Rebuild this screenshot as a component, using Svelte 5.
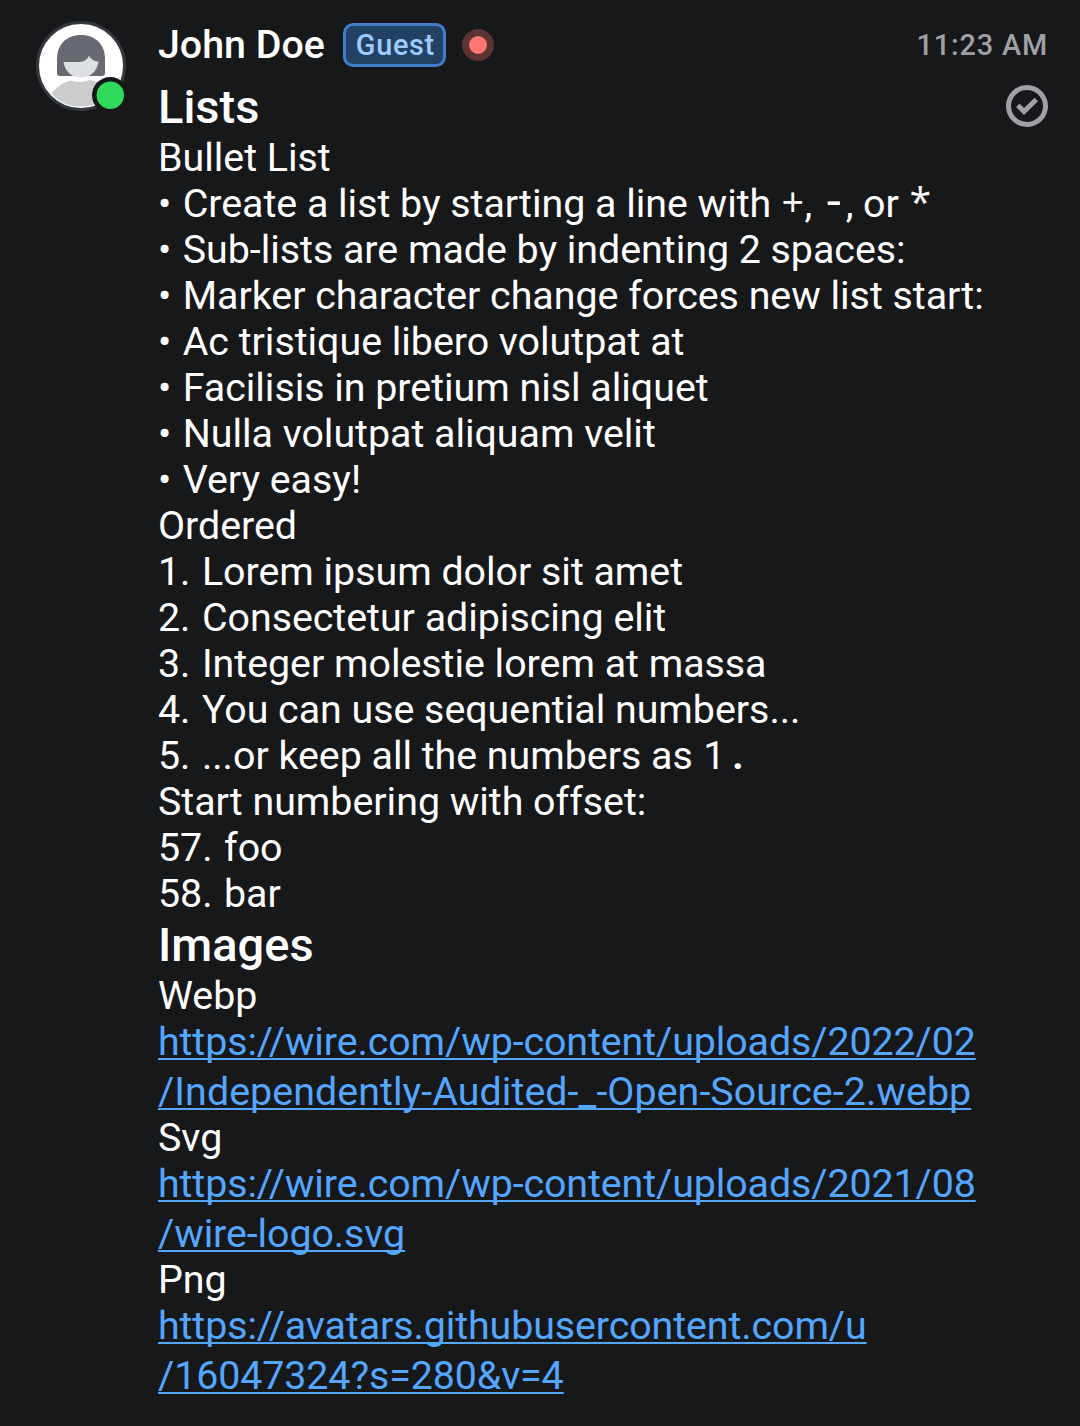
<script>
  const bullets = [
    'Sub-lists are made by indenting 2 spaces:',
    'Marker character change forces new list start:',
    'Ac tristique libero volutpat at',
    'Facilisis in pretium nisl aliquet',
    'Nulla volutpat aliquam velit',
    'Very easy!'
  ];
  const ordered = [
    'Lorem ipsum dolor sit amet',
    'Consectetur adipiscing elit',
    'Integer molestie lorem at massa',
    'You can use sequential numbers...'
  ];
  const images = [
    { name: 'Webp', parts: ['https://wire.com/wp-content/uploads/2022/02', '/Independently-Audited-_-Open-Source-2.webp'], loose: true },
    { name: 'Svg', parts: ['https://wire.com/wp-content/uploads/2021/08', '/wire-logo.svg'] },
    { name: 'Png', parts: ['https://avatars.githubusercontent.com/u', '/16047324?s=280&v=4'] }
  ];
</script>

<article class="message">
  <div class="avatar">
    <svg width="92" height="92" viewBox="0 0 92 92" aria-hidden="true">
      <circle cx="45" cy="45" r="43.5" fill="#fff" stroke="#34373d" stroke-width="3" />
      <path d="M15.500 72.500C20 66 28 61 35 59.500C41 61.500 48 61 54 59C64 61 70 66 74 72Q64 85.500 45 85.500T15.500 72.500Z" fill="#caccce" />
      <path d="M21 51V38C21 24 30 14 45 14S69 24 69 38V52Q69 55 66 55H24Q21 55 21 52Z" fill="#676b71" />
      <path d="M27.500 41H44Q51 40 53 34.700Q56 40.500 62.500 40.500C61 51 54 56.500 45 56.500S29 51 27.500 41Z" fill="#dce0e3" />
      <circle cx="74.300" cy="74.300" r="18.300" fill="#17181a" />
      <circle cx="74.300" cy="74.300" r="13.700" fill="#30db5b" />
    </svg>
  </div>
  <div class="content">
    <header>
      <span class="name">John Doe</span>
      <span class="badge">Guest</span>
      <span class="dot"></span>
      <time>11:23 AM</time>
    </header>
    <div class="body">
      <div class="text">
        <h2 class="lists">Lists</h2>
        <p>Bullet List</p>
        <p><span class="marker">•</span> Create a list by starting a line with <code>+</code>, <code class="dash">-</code>, or <code>*</code></p>
        {#each bullets as item}
          <p><span class="marker">•</span> {item}</p>
        {/each}
        <p>Ordered</p>
        {#each ordered as item, i}
          <p><span class="marker">{i + 1}.</span> {item}</p>
        {/each}
        <p><span class="marker">5.</span> ...or keep all the numbers as <code class="digit">1</code><code class="digit point">.</code></p>
        <p>Start numbering with offset:</p>
        <p><span class="marker">57.</span> foo</p>
        <p><span class="marker">58.</span> bar</p>
        <h2 class="images">Images</h2>
        {#each images as image}
          <p>{image.name}</p>
          <a href={image.parts.join('')}>{image.parts[0]}<br /><span class:loose={image.loose}>{image.parts[1]}</span></a>
        {/each}
      </div>
      <svg class="check" width="42" height="42" viewBox="0 0 42 42" aria-label="Sent">
        <circle cx="21" cy="21" r="18.500" fill="none" stroke="#9fa1a7" stroke-width="5" />
        <path d="M11.800 20.300L18 26.500L30.300 14.500" fill="none" stroke="#9fa1a7" stroke-width="5" />
      </svg>
    </div>
  </div>
</article>

<style>
  :global(body) {
    margin: 0;
    background: #17181a;
  }
  .message {
    box-sizing: border-box;
    width: 1080px;
    height: 1426px;
    padding: 21px 32px 0 36px;
    display: flex;
    background: #17181a;
    color: #fff;
    font: 400 39.375px/46px Roboto, sans-serif;
    overflow: hidden;
  }
  .avatar {
    width: 122px;
    flex: none;
  }
  .avatar svg {
    display: block;
  }
  .content {
    flex: 1;
    min-width: 0;
  }
  header {
    display: flex;
    align-items: center;
    height: 48px;
    white-space: nowrap;
  }
  .name {
    font-weight: 500;
  }
  .badge {
    box-sizing: border-box;
    width: 103px;
    height: 44px;
    margin-left: 18px;
    padding-left: 2px;
    border: 3px solid #407ecb;
    border-radius: 10px;
    background: #234163;
    color: #9dccff;
    font-size: 28.875px;
    font-weight: 500;
    line-height: 38px;
    letter-spacing: 0.7px;
    text-align: center;
  }
  .dot {
    box-sizing: border-box;
    width: 32px;
    height: 32px;
    margin-left: 16px;
    border: 7px solid #5c3434;
    border-radius: 50%;
    background: #ff7770;
  }
  time {
    margin-left: auto;
    color: #9fa1a7;
    font-size: 28.875px;
    font-weight: 500;
    letter-spacing: 0.85px;
  }
  .body {
    display: flex;
    justify-content: space-between;
  }
  .text {
    white-space: nowrap;
  }
  .check {
    flex: none;
    margin-top: 16px;
  }
  p,
  h2 {
    margin: 0;
  }
  p {
    letter-spacing: -0.02px;
  }
  h2 {
    font-size: 47px;
    font-weight: 500;
  }
  .lists {
    box-sizing: border-box;
    height: 66px;
    padding-top: 15px;
  }
  .images {
    height: 56px;
    line-height: 56px;
  }
  .marker {
    margin-right: 1.700px;
  }
  a {
    display: block;
    margin: -2px 0;
    color: #54a6ff;
    line-height: 50px;
    letter-spacing: -0.09px;
    text-decoration: underline 2px;
    text-decoration-skip-ink: none;
    text-underline-offset: 3px;
  }
  .loose {
    letter-spacing: 0.07px;
  }
  code {
    display: inline-block;
    width: 23.6px;
    font-family: 'Open Sans', sans-serif;
    font-size: 39.375px;
    line-height: 30px;
    text-align: center;
  }
  .dash {
    font-size: 50px;
    line-height: 24px;
  }
  .digit {
    font-family: Roboto, sans-serif;
    line-height: 46px;
  }
  .point {
    font-weight: 700;
  }
</style>
